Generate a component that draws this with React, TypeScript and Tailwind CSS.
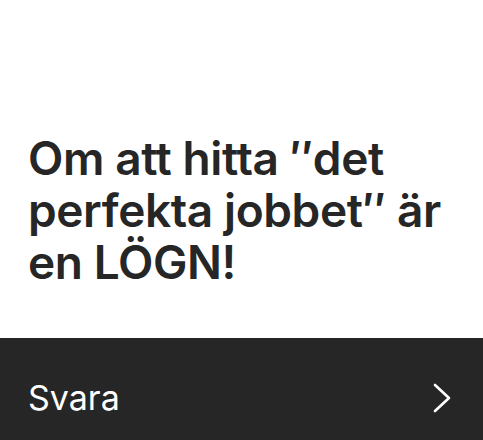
export default function App() {
  return (
    <div className="flex h-[440px] w-[483px] flex-col bg-white font-['Inter',sans-serif]">
      <div className="flex flex-1 items-end px-7 pb-[50px]">
        <h1 className="text-[46px] font-semibold leading-[52px] tracking-[-0.4px] text-[#262626]">
          Om att hitta ″det perfekta jobbet″ är en LÖGN!
        </h1>
      </div>
      <button className="flex h-[102px] items-center justify-between bg-[#262626] px-7 pt-[18px] text-left">
        <span className="text-[34px] font-normal leading-[34px] text-white">Svara</span>
        <svg width="20" height="32" viewBox="0 0 20 32" fill="none" className="mr-[3px]">
          <path d="M3 3 L17 16 L3 29" stroke="white" strokeWidth="2.6" strokeLinecap="round" strokeLinejoin="round" />
        </svg>
      </button>
    </div>
  )
}
